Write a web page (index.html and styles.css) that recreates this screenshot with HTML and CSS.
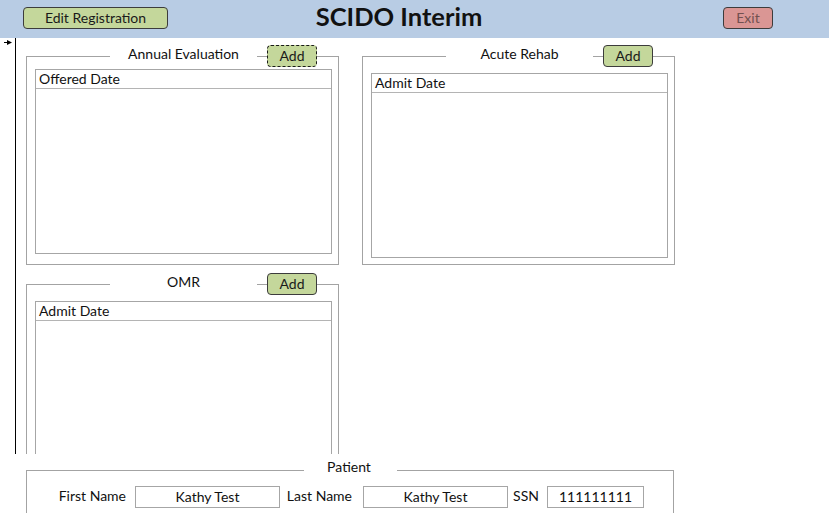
FILE: index.html
```html
<!DOCTYPE html>
<html>
<head>
<meta charset="utf-8">
<link rel="stylesheet" href="styles.css">
</head>
<body>
<div class="page">
  <header class="topbar">
    <button class="btn btn-green btn-edit">Edit Registration</button>
    <div class="title">SCIDO Interim</div>
    <button class="btn btn-exit">Exit</button>
  </header>

  <main class="main">
    <div class="rail">
      <svg class="arrow" width="8" height="6" viewBox="0 0 8 6"><path d="M0 2.5h4" stroke="#000" stroke-width="1"/><path d="M3 0L8 2.5L3 5Z" fill="#000"/></svg>
    </div>
    <div class="groups">
      <section class="group">
        <div class="group-head">
          <span class="group-label">Annual Evaluation</span>
          <button class="btn btn-green btn-add focused">Add</button>
        </div>
        <div class="listbox">
          <div class="listbox-head">Offered Date</div>
        </div>
      </section>

      <section class="group">
        <div class="group-head">
          <span class="group-label">Acute Rehab</span>
          <button class="btn btn-green btn-add">Add</button>
        </div>
        <div class="listbox lower">
          <div class="listbox-head">Admit Date</div>
        </div>
      </section>

      <section class="group">
        <div class="group-head">
          <span class="group-label">OMR</span>
          <button class="btn btn-green btn-add">Add</button>
        </div>
        <div class="listbox lower">
          <div class="listbox-head">Admit Date</div>
        </div>
      </section>
    </div>
  </main>

  <footer class="footer">
    <section class="patient">
      <div class="patient-head">
        <span class="patient-label">Patient</span>
      </div>
      <div class="fields">
        <label class="field-label fl-first">First Name</label>
        <div class="textbox tb-name">Kathy Test</div>
        <label class="field-label fl-last">Last Name</label>
        <div class="textbox tb-name">Kathy Test</div>
        <label class="field-label fl-ssn">SSN</label>
        <div class="textbox tb-ssn">111111111</div>
      </div>
    </section>
  </footer>
</div>
</body>
</html>
```
FILE: styles.css
```css
* { box-sizing: border-box; }
html, body { margin: 0; padding: 0; background: #fff; }
body {
  font-family: "Lato", "Liberation Sans", sans-serif;
  font-size: 14px;
  color: #111;
}
.page { width: 829px; height: 513px; overflow: hidden; }

.topbar {
  height: 38px;
  background: #b8cce4;
  display: flex;
  align-items: flex-start;
  padding: 7px 0 0 23px;
}
.btn {
  font-family: inherit;
  font-size: 14px;
  height: 22px;
  padding: 0;
  line-height: 20px;
  border: 1px solid #3c3c3c;
  border-radius: 4px;
  color: #1a1a1a;
  cursor: default;
}
.btn-green { background: #c4d79b; }
.btn-edit { width: 145px; }
.title {
  width: 200px;
  margin-left: 131px;
  margin-top: -7px;
  text-align: center;
  font-size: 25.5px;
  font-weight: bold;
  line-height: 32px;
  color: #111;
}
.btn-exit {
  width: 50px;
  margin-left: auto;
  margin-right: 56px;
  background: #da9694;
  color: #725050;
}

.main {
  height: 416px;
  display: flex;
  overflow: hidden;
}
.rail {
  width: 16px;
  border-right: 1px solid #000;
  padding: 2px 0 0 4px;
}
.arrow { display: block; }
.groups {
  padding: 18px 0 0 10px;
  display: grid;
  grid-template-columns: 313px 313px;
  column-gap: 23px;
  row-gap: 19px;
  align-content: start;
}
.group {
  height: 209px;
  border: 1px solid #a3a3a3;
}
.group-head {
  display: flex;
  align-items: center;
  height: 22px;
  margin-top: -12px;
  padding-left: 83px;
}
.group-label {
  width: 147px;
  background: #fff;
  text-align: center;
  line-height: 20px;
  padding-bottom: 4px;
}
.btn-add { width: 50px; margin-left: 10px; }
.btn-add.focused { border: 1px dashed #1a1a1a; }

.listbox {
  width: 297px;
  height: 185px;
  margin: 2px 0 0 8px;
  border: 1px solid #a6a6a6;
}
.listbox.lower { margin-top: 6px; }
.listbox-head {
  height: 19px;
  line-height: 17px;
  padding-left: 3px;
  border-bottom: 1px solid #b4b4b4;
}

.footer {
  height: 59px;
  padding: 16px 0 0 26px;
}
.patient {
  width: 648px;
  height: 60px;
  border: 1px solid #a3a3a3;
  border-bottom: none;
}
.patient-head {
  height: 22px;
  margin-top: -12px;
  display: flex;
  justify-content: center;
  align-items: flex-start;
}
.patient-label {
  width: 93px;
  height: 18px;
  background: #fff;
  text-align: center;
  line-height: 16px;
  padding-right: 2px;
}
.fields {
  display: flex;
  align-items: flex-start;
  margin-top: 5px;
}
.field-label { text-align: right; line-height: 19px; }
.fl-first { width: 108px; padding-right: 9px; }
.fl-last { width: 83px; padding-right: 11px; }
.fl-ssn { width: 39px; padding-right: 8px; }
.textbox {
  height: 22px;
  line-height: 20px;
  border: 1px solid #a6a6a6;
  text-align: center;
}
.tb-name { width: 145px; }
.tb-ssn { width: 97px; }
```
